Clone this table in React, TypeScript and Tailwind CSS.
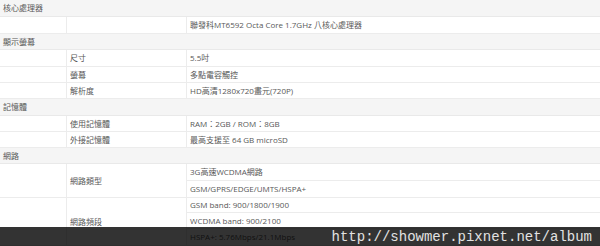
import React from 'react';

type Cell = { text: string; rows?: number };

const font = "font-['Open_Sans','Noto_Sans_CJK_TC',sans-serif]";

function Header({ label }: { label: string }) {
  return (
    <div className="col-span-3 flex items-center bg-[#f5f5f5] border-b border-[#e9e9e9] px-[3px]">
      {label}
    </div>
  );
}

function Blank({ rows = 1 }: { rows?: number }) {
  const span = rows === 3 ? 'row-span-3' : rows === 2 ? 'row-span-2' : '';
  return <div className={`${span} border-b border-r border-[#ececec]`} />;
}

function Label({ text, rows }: Cell) {
  const span = rows === 3 ? 'row-span-3' : rows === 2 ? 'row-span-2' : '';
  return (
    <div className={`${span} flex items-center border-b border-r border-[#ececec] pl-[3px]`}>
      {text}
    </div>
  );
}

function Value({ text }: { text: string }) {
  return <div className="flex items-center border-b border-[#ececec] pl-[3px]">{text}</div>;
}

export default function App() {
  return (
    <div className={`relative w-[600px] h-[246px] overflow-hidden bg-white text-[8px] leading-none text-[#585858] ${font}`}>
      <div className="grid grid-cols-[67px_120px_1fr] grid-rows-[17px_17px_16px_17px_16px_16px_17px_16px_16px_16px_17px_17px_15px_16px_17px]">
        <Header label="核心處理器" />
        <Blank />
        <Label text="" />
        <Value text="聯發科MT6592 Octa Core 1.7GHz 八核心處理器" />

        <Header label="顯示螢幕" />
        <Blank />
        <Label text="尺寸" />
        <Value text="5.5吋" />
        <Blank />
        <Label text="螢幕" />
        <Value text="多點電容觸控" />
        <Blank />
        <Label text="解析度" />
        <Value text="HD高清1280x720畫元(720P)" />

        <Header label="記憶體" />
        <Blank />
        <Label text="使用記憶體" />
        <Value text="RAM：2GB / ROM：8GB" />
        <Blank />
        <Label text="外接記憶體" />
        <Value text="最高支援至 64 GB microSD" />

        <Header label="網路" />
        <Blank rows={2} />
        <Label text="網路類型" rows={2} />
        <Value text="3G高速WCDMA網路" />
        <Value text="GSM/GPRS/EDGE/UMTS/HSPA+" />
        <Blank rows={3} />
        <Label text="網路頻段" rows={3} />
        <Value text="GSM band: 900/1800/1900" />
        <Value text="WCDMA band: 900/2100" />
        <Value text="HSPA+: 5.76Mbps/21.1Mbps" />
      </div>

      <div className="absolute left-0 right-0 bottom-0 h-[19px] bg-black/80 flex items-center justify-end pr-[8px]">
        <span className="font-['Liberation_Mono',monospace] text-[14px] leading-none text-[#e2e2e2]">
          http://showmer.pixnet.net/album
        </span>
      </div>
    </div>
  );
}
